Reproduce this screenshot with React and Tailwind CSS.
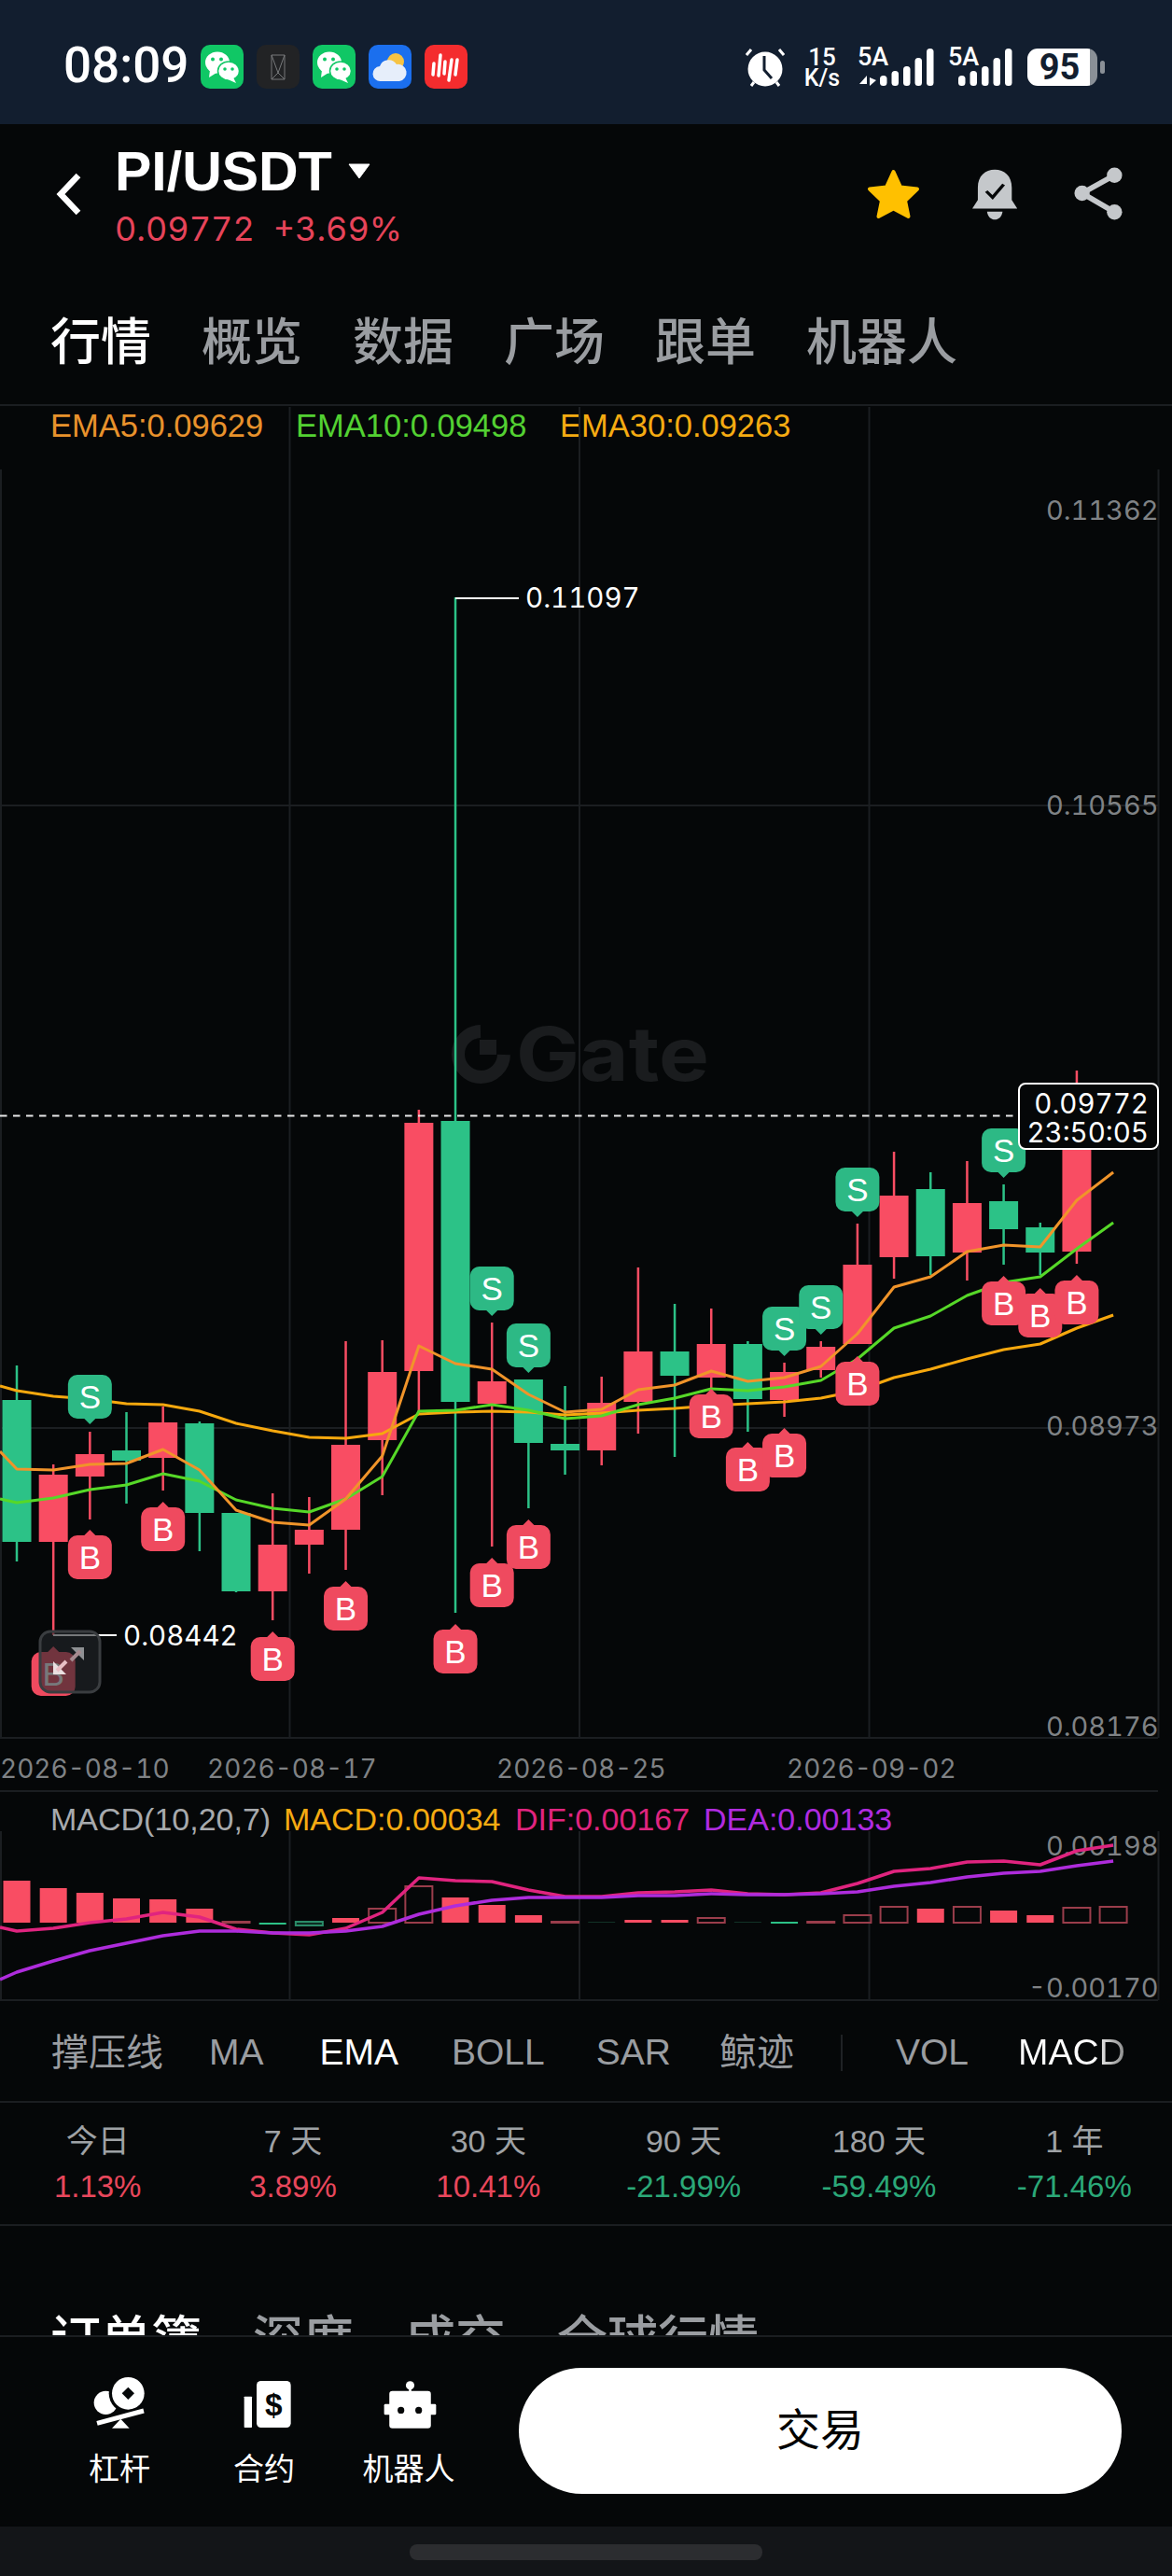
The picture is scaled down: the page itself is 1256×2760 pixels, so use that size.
const RED = '#f94d63';
const GREEN = '#2cc287';
const GRID = '#1b1e21';
const AXIS = '#7f8285';
const NUM = 'Inter, sans-serif';
const SANS = '"Liberation Sans", sans-serif';

const X = (i) => 18 + 39.17 * i;

// [body top, body bottom, wick top, wick bottom, colour]
const candles = [
  [1500, 1652, 1463, 1673, 'g'],
  [1580, 1652, 1569, 1752, 'r'],
  [1558, 1582, 1534, 1628, 'r'],
  [1554, 1565, 1513, 1611, 'g'],
  [1524, 1562, 1507, 1597, 'r'],
  [1525, 1621, 1523, 1662, 'g'],
  [1621, 1705, 1621, 1706, 'g'],
  [1655, 1705, 1600, 1736, 'r'],
  [1639, 1655, 1604, 1686, 'r'],
  [1548, 1639, 1437, 1682, 'r'],
  [1470, 1543, 1436, 1602, 'r'],
  [1203, 1469, 1189, 1514, 'r'],
  [1201, 1502, 640, 1728, 'g'],
  [1480, 1504, 1417, 1657, 'r'],
  [1478, 1546, 1478, 1616, 'g'],
  [1547, 1554, 1485, 1580, 'g'],
  [1503, 1554, 1475, 1570, 'r'],
  [1448, 1502, 1358, 1536, 'r'],
  [1448, 1474, 1397, 1561, 'g'],
  [1440, 1476, 1402, 1490, 'r'],
  [1440, 1499, 1437, 1534, 'g'],
  [1470, 1500, 1460, 1518, 'r'],
  [1443, 1468, 1437, 1476, 'r'],
  [1355, 1440, 1311, 1440, 'r'],
  [1281, 1347, 1234, 1370, 'r'],
  [1274, 1346, 1256, 1366, 'g'],
  [1289, 1342, 1244, 1372, 'r'],
  [1287, 1317, 1269, 1355, 'g'],
  [1315, 1342, 1310, 1366, 'g'],
  [1195, 1341, 1147, 1354, 'r'],
];

const ema5 = [1555, 1574, 1575, 1569, 1568, 1553, 1575, 1618, 1631, 1634, 1606, 1560, 1442, 1461, 1467, 1494, 1513, 1510, 1489, 1484, 1469, 1480, 1476, 1464, 1429, 1379, 1368, 1341, 1334, 1336, 1286, 1256];
const ema10 = [1606, 1610, 1605, 1596, 1591, 1579, 1587, 1607, 1616, 1620, 1606, 1582, 1512, 1511, 1505, 1511, 1520, 1517, 1505, 1498, 1488, 1490, 1486, 1479, 1456, 1423, 1410, 1388, 1374, 1368, 1338, 1310];
const ema30 = [1485, 1490, 1496, 1499, 1504, 1505, 1512, 1525, 1533, 1540, 1541, 1536, 1515, 1513, 1512, 1513, 1516, 1514, 1511, 1509, 1506, 1504, 1502, 1498, 1490, 1476, 1467, 1456, 1446, 1440, 1423, 1409];

// marker index and top edge of the box
const sells = [[2, 1473], [13, 1357], [14, 1418], [21, 1400], [22, 1377], [23, 1251], [27, 1209]];
const buys = [[1, 1770], [2, 1645], [4, 1615], [7, 1754], [9, 1700], [12, 1746], [13, 1675], [14, 1634], [19, 1494], [20, 1551], [21, 1536], [23, 1459], [27, 1373], [28, 1386], [29, 1372]];

// [top, bottom, kind] s solid red, h hollow red, g solid green, o hollow green
const macdBars = [
  [2015, 2060, 's'], [2023, 2060, 's'], [2028, 2060, 's'], [2034, 2060, 's'], [2035, 2060, 's'], [2045, 2060, 's'],
  [2059, 2060, 'h'], [2060, 2062, 'g'], [2059, 2063, 'o'], [2055, 2060, 's'], [2045, 2060, 'h'], [2021, 2060, 'h'],
  [2033, 2060, 's'], [2041, 2060, 's'], [2052, 2060, 's'], [2059, 2060, 'h'], [2059, 2060, 'f'], [2057, 2060, 's'],
  [2057, 2060, 's'], [2055, 2060, 'h'], [2059, 2060, 'f'], [2059, 2061, 'g'], [2059, 2060, 'h'], [2052, 2060, 'h'],
  [2043, 2060, 'h'], [2045, 2060, 's'], [2043, 2060, 'h'], [2047, 2060, 's'], [2052, 2060, 's'], [2044, 2060, 'h'],
  [2043, 2060, 'h'],
];
const dif = [2065, 2069, 2066, 2060, 2056, 2049, 2054, 2067, 2071, 2073, 2066, 2049, 2012, 2015, 2016, 2025, 2032, 2032, 2028, 2027, 2025, 2029, 2030, 2028, 2018, 2005, 2002, 1995, 1994, 1998, 1983, 1977];
const dea = [2121, 2113, 2101, 2090, 2082, 2074, 2069, 2069, 2071, 2071, 2069, 2064, 2051, 2042, 2036, 2033, 2033, 2033, 2031, 2031, 2029, 2030, 2030, 2029, 2027, 2021, 2017, 2011, 2007, 2005, 1999, 1994];

const toPoints = (ys) => ys.map((y, n) => `${n === 0 ? 0 : X(n - 1)},${y}`).join(' ');

function Marker({ i, top, kind }) {
  const x = X(i);
  const color = kind === 'B' ? '#ef4a5f' : '#2db985';
  const tip = kind === 'B'
    ? `${x - 7},${top + 1} ${x},${top - 6} ${x + 7},${top + 1}`
    : `${x - 7},${top + 46} ${x},${top + 53} ${x + 7},${top + 46}`;
  return (
    <g>
      <polygon points={tip} fill={color} />
      <rect x={x - 23.5} y={top} width="47" height="47" rx="10" fill={color} />
      <text x={x} y={top + 36} textAnchor="middle" fontSize="35" fontFamily={SANS} fill="#fff">{kind}</text>
    </g>
  );
}

function AxisLabel({ y, children }) {
  return <text x="1241.5" y={y} textAnchor="end" fontSize="29" fontFamily={NUM} fill={AXIS}>{children}</text>;
}

function PriceChart() {
  return (
    <svg className="block w-full h-[1485px] tabular-nums" viewBox="0 435 1256 1485">
      {/* legend */}
      <g fontSize="34.5" fontFamily={SANS}>
        <text x="54" y="468" fill="#e8922c">EMA5:0.09629</text>
        <text x="317" y="468" fill="#53d132">EMA10:0.09498</text>
        <text x="600" y="468" fill="#f5ab12">EMA30:0.09263</text>
      </g>

      {/* grid */}
      <g stroke={GRID} strokeWidth="2">
        {[310.5, 621, 931.5].map((x) => <line key={x} x1={x} x2={x} y1="436" y2="1862" />)}
        <line x1="1" x2="1" y1="503" y2="1862" />
        <line x1="1241.5" x2="1241.5" y1="503" y2="1862" />
        {[863, 1530].map((y) => <line key={y} x1="0" x2="1241" y1={y} y2={y} />)}
        <line x1="0" x2="1241" y1="1862" y2="1862" />
        <line x1="0" x2="1241" y1="1919" y2="1919" />
      </g>

      {/* watermark */}
      <g>
        <path d="M515 1105 A24.5 24.5 0 1 0 540 1130" fill="none" stroke="#1a1c1e" strokeWidth="14" />
        <rect x="514" y="1114" width="18" height="16" fill="#1a1c1e" />
        <text x="553" y="1158" fontSize="80" fontWeight="700" fontFamily={NUM} fill="#1a1c1e" textLength="207" lengthAdjust="spacingAndGlyphs">Gate</text>
      </g>

      {/* candles */}
      {candles.map(([top, bottom, wickTop, wickBottom, c], i) => (
        <g key={i} fill={c === 'r' ? RED : GREEN}>
          <rect x={X(i) - 1.25} y={wickTop} width="2.5" height={wickBottom - wickTop} />
          <rect x={X(i) - 15.5} y={top} width="31" height={bottom - top} />
        </g>
      ))}

      {/* current price */}
      <line x1="0" x2="1092" y1="1195.5" y2="1195.5" stroke="#e8e8e8" strokeWidth="2" strokeDasharray="7.5 6.5" />

      {/* moving averages */}
      <g fill="none" strokeWidth="3" strokeLinejoin="round">
        <polyline points={toPoints(ema30)} stroke="#f6a80e" />
        <polyline points={toPoints(ema10)} stroke="#56d828" />
        <polyline points={toPoints(ema5)} stroke="#f0942a" />
      </g>

      {/* high and low */}
      <g stroke="#fff" strokeWidth="2">
        <line x1="488" x2="556" y1="641" y2="641" />
        <line x1="57" x2="125" y1="1752" y2="1752" />
      </g>
      <g fontSize="29.5" fontFamily={NUM} fill="#fff">
        <text x="563" y="651">0.11097</text>
        <text x="132" y="1763">0.08442</text>
      </g>

      {sells.map(([i, top]) => <Marker key={`s${i}`} i={i} top={top} kind="S" />)}
      {buys.map(([i, top]) => <Marker key={`b${i}`} i={i} top={top} kind="B" />)}

      {/* price tag */}
      <rect x="1092" y="1161" width="149" height="70" rx="7" fill="#050708" stroke="#fff" strokeWidth="2" />
      <g fontSize="29.5" fontFamily={NUM} fill="#fff" textAnchor="end">
        <text x="1231" y="1193">0.09772</text>
        <text x="1231" y="1224">23:50:05</text>
      </g>

      {/* axis */}
      <AxisLabel y="557">0.11362</AxisLabel>
      <AxisLabel y="873">0.10565</AxisLabel>
      <AxisLabel y="1538">0.08973</AxisLabel>
      <AxisLabel y="1860">0.08176</AxisLabel>
      <g fontSize="28" fontFamily={NUM} fill={AXIS}>
        <text x="0" y="1905">2026-08-10</text>
        <text x="222" y="1905">2026-08-17</text>
        <text x="532" y="1905">2026-08-25</text>
        <text x="843" y="1905">2026-09-02</text>
      </g>

      {/* collapse button over the chart */}
      <rect x="43" y="1748" width="64" height="65" rx="11" fill="#23262a" fillOpacity="0.62" stroke="#3a3d40" strokeWidth="3" />
      <polygon points="76,1765 90,1765 90,1779" fill="#8e9093" />
      <line x1="86" y1="1769" x2="76" y2="1779" stroke="#a58a8f" strokeWidth="4" />
      <polygon points="71,1794 57,1794 57,1780" fill="#e9dfe0" />
      <line x1="61" y1="1790" x2="71" y2="1780" stroke="#e9bfc5" strokeWidth="4" />
    </svg>
  );
}

function MacdChart() {
  const barStyle = {
    s: { fill: RED },
    h: { fill: 'none', stroke: '#9a3d4b', strokeWidth: 2 },
    g: { fill: GREEN },
    o: { fill: '#0d2c22', stroke: '#2a8b68', strokeWidth: 2 },
    f: { fill: '#123226' },
  };
  return (
    <svg className="block w-full h-[224px] tabular-nums overflow-visible" viewBox="0 1920 1256 224">
      <g fontSize="34" fontFamily={SANS}>
        <text x="54" y="1961" fill="#a7aaad">MACD(10,20,7)</text>
        <text x="304" y="1961" fill="#f5ab12">MACD:0.00034</text>
        <text x="552" y="1961" fill="#e0247f">DIF:0.00167</text>
        <text x="754" y="1961" fill="#b02be0">DEA:0.00133</text>
      </g>
      <g stroke={GRID} strokeWidth="2">
        {[1, 310.5, 621, 931.5, 1241.5].map((x) => <line key={x} x1={x} x2={x} y1="1962" y2="2143" />)}
        <line x1="0" x2="1241" y1="2143" y2="2143" />
      </g>
      {macdBars.map(([top, bottom, kind], i) => (
        <rect key={i} x={X(i) - 14.5} y={top} width="29" height={Math.max(bottom - top, 1)} {...barStyle[kind]} />
      ))}
      <AxisLabel y="1988">0.00198</AxisLabel>
      <AxisLabel y="2140">-0.00170</AxisLabel>
      <g fill="none" strokeWidth="3.5" strokeLinejoin="round">
        <polyline points={toPoints(dif)} stroke="#e0247f" />
        <polyline points={toPoints(dea)} stroke="#ae2cdc" />
      </g>
    </svg>
  );
}

function WeChatIcon() {
  return (
    <div className="w-[46px] h-[47px] rounded-[10px] bg-[#10c765] flex items-center justify-center">
      <svg width="38" height="36" viewBox="0 0 38 36">
        <ellipse cx="14" cy="13" rx="13" ry="11.5" fill="#fff" />
        <polygon points="6,21 5,29 13,24" fill="#fff" />
        <ellipse cx="26" cy="22" rx="11.5" ry="10" fill="#fff" stroke="#10c765" strokeWidth="1.5" />
        <polygon points="31,29 34,35 25,31" fill="#fff" />
        <circle cx="9" cy="9.5" r="2" fill="#10c765" />
        <circle cx="18" cy="9.5" r="2" fill="#10c765" />
        <circle cx="22" cy="20" r="1.8" fill="#10c765" />
        <circle cx="30" cy="20" r="1.8" fill="#10c765" />
      </svg>
    </div>
  );
}

function DarkAppIcon() {
  return (
    <div className="w-[46px] h-[47px] rounded-[10px] bg-[#222325] flex items-center justify-center">
      <svg width="16" height="28" viewBox="0 0 16 28" fill="none" stroke="#77797b" strokeWidth="1">
        <path d="M1 1H15V27H1ZM1 1L8 20L15 1M1 27L8 20L15 27" />
      </svg>
    </div>
  );
}

function WeatherIcon() {
  return (
    <div className="w-[46px] h-[47px] rounded-[10px] bg-[#1b6fee] flex items-center justify-center">
      <svg width="38" height="34" viewBox="0 0 38 34">
        <circle cx="25" cy="11" r="9" fill="#f6c343" />
        <path d="M9 32a8 8 0 0 1-1-16 10 10 0 0 1 18-2 8.500 8.500 0 0 1 3 18Z" fill="#e6eefa" />
      </svg>
    </div>
  );
}

function RedAppIcon() {
  return (
    <div className="w-[46px] h-[47px] rounded-[10px] bg-[#f42c2e] flex items-center justify-center">
      <svg width="34" height="32" viewBox="0 0 34 32" stroke="#fff" strokeWidth="3.5" strokeLinecap="round">
        <line x1="3" y1="24" x2="4" y2="12" />
        <line x1="9" y1="25" x2="11" y2="3" />
        <line x1="15" y1="23" x2="16" y2="10" />
        <line x1="20" y1="30" x2="23" y2="8" />
        <line x1="27" y1="24" x2="29" y2="8" />
      </svg>
    </div>
  );
}

function AlarmIcon() {
  return (
    <svg width="42" height="43" viewBox="0 0 42 43" fill="none">
      <circle cx="21" cy="23" r="18.500" fill="#fff" />
      <path d="M20 9V24L28 33" stroke="#121e2f" strokeWidth="3" />
      <path d="M1 8L6 2M41 8L36 2M6 41L9 37M36 41L33 37" stroke="#fff" strokeWidth="3" />
    </svg>
  );
}

function SignalBars() {
  const tops = [29, 24, 19, 10, 0];
  return (
    <svg width="58" height="40" viewBox="0 0 58 40" fill="#fff">
      {tops.map((t, n) => <rect key={n} x={n * 12.5} y={t} width="7.500" height={40 - t} rx="3.500" />)}
    </svg>
  );
}

function StatusBar() {
  return (
    <div className="h-[133px] bg-[#121e2f] flex items-center pl-[68px] pr-[72px] text-white font-['Roboto',sans-serif]">
      <span className="text-[53px] font-medium leading-none w-[147px] mt-[8px]">08:09</span>
      <div className="flex gap-[14px] mt-[10px]">
        <WeChatIcon />
        <DarkAppIcon />
        <WeChatIcon />
        <WeatherIcon />
        <RedAppIcon />
      </div>
      <div className="ml-auto flex items-center h-[40px] mt-[11px]">
        <AlarmIcon />
        <div className="ml-[19px] w-[42px] flex flex-col items-center font-medium">
          <span className="text-[26px] leading-[24px]">15</span>
          <span className="text-[25px] leading-[22px]">K/s</span>
        </div>
        <div className="ml-[17px] relative w-[82px] h-[40px]">
          <span className="absolute left-0 -top-[4px] text-[27px] leading-[26px] font-medium">5A</span>
          <svg className="absolute left-[2px] bottom-0" width="18" height="11" viewBox="0 0 18 11" fill="#fff">
            <polygon points="8,0 8,9 0,9" />
            <polygon points="11,2 11,11 18,5" />
          </svg>
          <div className="absolute right-0 bottom-0 flex"><SignalBars /></div>
        </div>
        <div className="ml-[15px] relative w-[69px] h-[40px]">
          <span className="absolute left-0 -top-[4px] text-[27px] leading-[26px] font-medium">5A</span>
          <div className="absolute right-0 bottom-0 flex"><SignalBars /></div>
        </div>
        <div className="ml-[16px] w-[75px] h-[40px] rounded-[11px] bg-[linear-gradient(90deg,#fff_89%,#8a9097_89%)] flex items-center justify-center pr-[6px]">
          <span className="text-[#121e2f] text-[38px] font-bold leading-none">95</span>
        </div>
        <div className="ml-[3px] w-[5px] h-[14px] rounded-full bg-[#8a9097]" />
      </div>
    </div>
  );
}

function Header() {
  return (
    <div className="h-[302px] pt-[21px] border-b-2 border-[#1b1e21] flex flex-col">
      <div className="flex items-center pl-[60px] pr-[52px]">
        <svg className="mb-[6px]" width="27" height="46" viewBox="0 0 27 46" fill="none">
          <polyline points="24,3 5,23 24,43" stroke="#fff" strokeWidth="6.5" />
        </svg>
        <div className="ml-[36px]">
          <div className="flex items-center">
            <span className="text-white text-[59px] leading-[60px] font-bold">PI/USDT</span>
            <svg className="ml-[16px] mb-[2px]" width="26" height="17" viewBox="0 0 26 17">
              <path d="M2 1H24L13 16Z" fill="#fff" stroke="#fff" strokeLinejoin="round" />
            </svg>
          </div>
          <div className="mt-[10px] flex text-[#e6445a] text-[36px] leading-[43px] font-['Inter',sans-serif] tabular-nums gap-[20px]">
            <span>0.09772</span>
            <span>+3.69%</span>
          </div>
        </div>
        <div className="ml-auto flex items-center mb-[5px]">
          <svg width="57" height="54" viewBox="0 0 57 54">
            <path d="M28.500 3L36 19.500L54 21.500L41 34L44.500 51L28.500 42.500L12.500 51L16 34L3 21.500L21 19.500Z" fill="#ffc000" stroke="#ffc000" strokeWidth="4" strokeLinejoin="round" />
          </svg>
          <svg className="ml-[56px]" width="49" height="55" viewBox="1030 540 124 166" preserveAspectRatio="none">
            <path d="M1045 640V600C1045 562 1065 542 1091 542C1117 542 1137 562 1137 600V640L1152 668H1030Z" fill="#c5c8cb" />
            <path d="M1070 678H1112C1110 695 1101 704 1091 704C1081 704 1072 695 1070 678Z" fill="#c5c8cb" />
            <polyline points="1068,612 1085,632 1115,590" fill="none" stroke="#050708" strokeWidth="9" />
          </svg>
          <svg className="ml-[59px]" width="54" height="60" viewBox="1146 178 56 60">
            <path d="M1192 187L1156 207L1192 228" fill="none" stroke="#c5c8cb" strokeWidth="6" />
            <circle cx="1192" cy="187" r="8.500" fill="#c5c8cb" />
            <circle cx="1156" cy="207" r="8.500" fill="#c5c8cb" />
            <circle cx="1192" cy="228" r="8.500" fill="#c5c8cb" />
          </svg>
        </div>
      </div>
      <div className="mt-[70px] pl-[54px] flex gap-[54px] text-[54px] leading-[60px] font-medium text-[#9a9da1]">
        <span className="text-white">行情</span>
        <span>概览</span>
        <span>数据</span>
        <span>广场</span>
        <span>跟单</span>
        <span>机器人</span>
      </div>
    </div>
  );
}

function IndicatorRow() {
  return (
    <div className="h-[109px] border-b-2 border-[#1b1e21] flex items-center pl-[55px] pt-[3px] text-[39px] text-[#9a9da1]">
      <span className="text-[40px]">撑压线</span>
      <span className="ml-[49px]">MA</span>
      <span className="ml-[60px] text-white">EMA</span>
      <span className="ml-[57px]">BOLL</span>
      <span className="ml-[55px]">SAR</span>
      <span className="ml-[52px] text-[40px]">鲸迹</span>
      <span className="ml-[50px] w-[2px] h-[39px] bg-[#1f2225]" />
      <span className="ml-[57px]">VOL</span>
      <span className="ml-[53px] bg-gradient-to-r from-white from-70% to-[#8a8a8a] bg-clip-text text-transparent">MACD</span>
    </div>
  );
}

const stats = [
  ['今日', '1.13%', 'r'],
  ['7 天', '3.89%', 'r'],
  ['30 天', '10.41%', 'r'],
  ['90 天', '-21.99%', 'g'],
  ['180 天', '-59.49%', 'g'],
  ['1 年', '-71.46%', 'g'],
];

function StatsRow() {
  return (
    <div className="h-[132px] border-b-2 border-[#1b1e21] grid grid-cols-6 pt-[20px] text-center">
      {stats.map(([label, value, c]) => (
        <div key={label}>
          <div className="text-[34px] leading-[42px] text-[#9fa2a5]">{label}</div>
          <div className={`mt-[8px] text-[33px] leading-[40px] ${c === 'r' ? 'text-[#e8475c]' : 'text-[#2ba878]'}`}>{value}</div>
        </div>
      ))}
    </div>
  );
}

function LowerTabs() {
  return (
    <div className="h-[119px] overflow-hidden border-b-2 border-[#1b1e21] pt-[92px] pl-[54px] flex gap-[55px] text-[54px] leading-[60px] font-medium text-[#9a9da1]">
      <span className="text-white">订单簿</span>
      <span>深度</span>
      <span>成交</span>
      <span>全球行情</span>
    </div>
  );
}

function LeverIcon() {
  return (
    <svg width="56" height="56" viewBox="60 48 168 168">
      <circle cx="100" cy="130" r="38" fill="#fff" />
      <circle cx="172" cy="100" r="62" fill="#050708" />
      <circle cx="172" cy="100" r="52" fill="#fff" />
      <polygon points="172,80 192,100 172,120 152,100" fill="#050708" />
      <line x1="72" y1="196" x2="222" y2="156" stroke="#050708" strokeWidth="30" />
      <line x1="72" y1="196" x2="222" y2="156" stroke="#fff" strokeWidth="15" />
      <polygon points="120,212 148,182 176,212" fill="#fff" />
    </svg>
  );
}

function ContractIcon() {
  return (
    <svg className="ml-[8px]" width="52" height="52" viewBox="538 55 156 156">
      <rect x="540" y="105" width="25" height="100" rx="2" fill="#fff" />
      <rect x="580" y="55" width="110" height="150" rx="14" fill="#fff" />
      <text x="635" y="165" textAnchor="middle" fontSize="100" fontWeight="700" fontFamily={SANS} fill="#050708">$</text>
    </svg>
  );
}

function RobotIcon() {
  return (
    <svg className="ml-[2px]" width="57" height="53" viewBox="993 40 174 160">
      <line x1="1080" y1="57" x2="1080" y2="80" stroke="#fff" strokeWidth="8" />
      <circle cx="1080" cy="57" r="14" fill="#fff" />
      <rect x="1012" y="75" width="136" height="122" rx="10" fill="#fff" />
      <rect x="995" y="118" width="170" height="35" rx="4" fill="#fff" />
      <circle cx="1050" cy="138" r="11" fill="#050708" />
      <circle cx="1108" cy="138" r="11" fill="#050708" />
    </svg>
  );
}

function BottomNav() {
  const items = [
    ['杠杆', <LeverIcon key="l" />],
    ['合约', <ContractIcon key="c" />],
    ['机器人', <RobotIcon key="r" />],
  ];
  return (
    <div className="h-[203px] flex items-start pt-[37px] pl-[68px] pr-[54px]">
      <div className="flex">
        {items.map(([label, icon]) => (
          <div key={label} className="w-[120px] mr-[35px] flex flex-col items-center text-white">
            <div className="h-[62px] flex items-end pt-[10px]">{icon}</div>
            <span className="mt-[23px] text-[33px] leading-[40px] whitespace-nowrap">{label}</span>
          </div>
        ))}
      </div>
      <button className="ml-auto -mt-[4px] w-[646px] h-[135px] rounded-full bg-white text-black text-[47px]">交易</button>
    </div>
  );
}

export default function App() {
  return (
    <div className="relative w-[1256px] h-[2760px] overflow-hidden bg-[#050708] font-['Liberation_Sans','Noto_Sans_CJK_SC',sans-serif]">
      <StatusBar />
      <Header />
      <PriceChart />
      <MacdChart />
      <IndicatorRow />
      <StatsRow />
      <LowerTabs />
      <BottomNav />
      <div className="h-[54px] bg-[#131518] flex items-center justify-center">
        <div className="w-[378px] h-[17px] rounded-[8px] bg-[#2c2d30]" />
      </div>
    </div>
  );
}
